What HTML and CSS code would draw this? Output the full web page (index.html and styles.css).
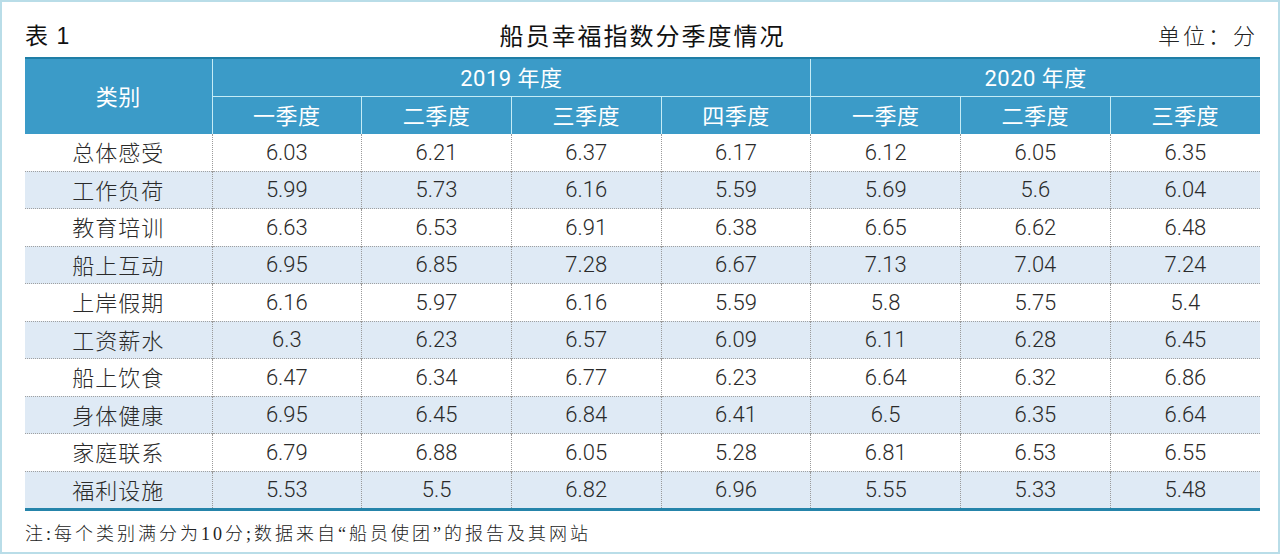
FILE: index.html
```html
<!DOCTYPE html>
<html lang="zh">
<head>
<meta charset="utf-8">
<link rel="stylesheet" href="styles.css">
</head>
<body>
<div class="frame">
  <div class="caption">
    <span class="tno">表 1</span>
    <span class="title">船员幸福指数分季度情况</span>
    <span class="unit">单位：分</span>
  </div>
  <table class="data">
    <colgroup>
      <col class="c0"><col><col><col><col><col><col><col>
    </colgroup>
    <thead>
      <tr class="h1">
        <th rowspan="2" class="cat">类别</th>
        <th colspan="4">2019 年度</th>
        <th colspan="3">2020 年度</th>
      </tr>
      <tr class="h2">
        <th>一季度</th><th>二季度</th><th>三季度</th><th>四季度</th>
        <th>一季度</th><th>二季度</th><th>三季度</th>
      </tr>
    </thead>
    <tbody>
      <tr><td class="name">总体感受</td><td>6.03</td><td>6.21</td><td>6.37</td><td>6.17</td><td>6.12</td><td>6.05</td><td>6.35</td></tr>
      <tr><td class="name">工作负荷</td><td>5.99</td><td>5.73</td><td>6.16</td><td>5.59</td><td>5.69</td><td>5.6</td><td>6.04</td></tr>
      <tr><td class="name">教育培训</td><td>6.63</td><td>6.53</td><td>6.91</td><td>6.38</td><td>6.65</td><td>6.62</td><td>6.48</td></tr>
      <tr><td class="name">船上互动</td><td>6.95</td><td>6.85</td><td>7.28</td><td>6.67</td><td>7.13</td><td>7.04</td><td>7.24</td></tr>
      <tr><td class="name">上岸假期</td><td>6.16</td><td>5.97</td><td>6.16</td><td>5.59</td><td>5.8</td><td>5.75</td><td>5.4</td></tr>
      <tr><td class="name">工资薪水</td><td>6.3</td><td>6.23</td><td>6.57</td><td>6.09</td><td>6.11</td><td>6.28</td><td>6.45</td></tr>
      <tr><td class="name">船上饮食</td><td>6.47</td><td>6.34</td><td>6.77</td><td>6.23</td><td>6.64</td><td>6.32</td><td>6.86</td></tr>
      <tr><td class="name">身体健康</td><td>6.95</td><td>6.45</td><td>6.84</td><td>6.41</td><td>6.5</td><td>6.35</td><td>6.64</td></tr>
      <tr><td class="name">家庭联系</td><td>6.79</td><td>6.88</td><td>6.05</td><td>5.28</td><td>6.81</td><td>6.53</td><td>6.55</td></tr>
      <tr><td class="name">福利设施</td><td>5.53</td><td>5.5</td><td>6.82</td><td>6.96</td><td>5.55</td><td>5.33</td><td>5.48</td></tr>
    </tbody>
  </table>
  <div class="note">注:每个类别满分为10分;数据来自“船员使团”的报告及其网站</div>
</div>
</body>
</html>
```

FILE: styles.css
```css
html, body {
  margin: 0;
  padding: 0;
  background: #ffffff;
}

.frame {
  box-sizing: border-box;
  width: 1280px;
  height: 554px;
  border: 2px solid #b9dde8;
  padding: 13px 18px 0 23px;
  font-family: "Liberation Sans", "Noto Sans CJK SC", sans-serif;
  color: #222;
}

.caption {
  display: grid;
  grid-template-columns: 1fr auto 1fr;
  align-items: center;
  height: 38px;
  margin-bottom: 4px;
  padding-right: 2px;
}

.tno {
  font-family: "Liberation Sans", "Noto Sans CJK SC", sans-serif;
  font-size: 23px;
  color: #111;
  justify-self: start;
  word-spacing: 2px;
}

.title {
  font-family: "Noto Sans CJK SC", sans-serif;
  font-size: 24px;
  color: #111;
  letter-spacing: 2px;
  margin-left: 2px;
}

.unit {
  font-family: "Liberation Serif", "Noto Sans CJK SC", serif;
  font-weight: 300;
  font-size: 22px;
  color: #222;
  justify-self: end;
  letter-spacing: 3px;
}

.data {
  width: 1235px;
  table-layout: fixed;
  border-collapse: collapse;
  border-top: 2px solid #1f7ea6;
  border-bottom: 3px solid #2584aa;
}

.c0 { width: 187px; }

.data th {
  background: #3b9bc8;
  color: #ffffff;
  font-family: "Roboto", "Noto Sans CJK SC", sans-serif;
  font-weight: 400;
  font-size: 22px;
  letter-spacing: 0.5px;
  height: 34px;
  padding: 0 0 3px 0;
  border-left: 1px solid #c4ecf6;
  border-top: 1px solid #c4ecf6;
  text-align: center;
}

.data tr.h1 th { border-top: none; }
.data th:first-child { border-left: none; }
.data tr.h2 th:first-child { border-left: 1px solid #c4ecf6; }

.data td {
  height: 36.5px;
  padding: 0;
  text-align: center;
  font-family: "Roboto", "Liberation Sans", "Noto Sans CJK SC", sans-serif;
  font-weight: 300;
  font-size: 22px;
  color: #2a2a2a;
  border-left: 1px dotted #9a9a9a;
  border-top: 1px dotted #a0a0a0;
}

.data tbody tr:first-child td { border-top: none; }
.data td:first-child { border-left: none; }

.data td.name {
  font-family: "Noto Sans CJK SC", sans-serif;
  font-weight: 300;
  font-size: 22px;
  color: #2a2a2a;
  letter-spacing: 1px;
  height: 34.5px;
  padding-bottom: 2px;
}

.data tbody tr:nth-child(even) td {
  background: #dfeaf5;
}

.note {
  margin-top: 8px;
  font-family: "Liberation Serif", "Noto Sans CJK SC", serif;
  font-weight: 300;
  font-size: 18px;
  color: #222;
  letter-spacing: 3px;
}
```
